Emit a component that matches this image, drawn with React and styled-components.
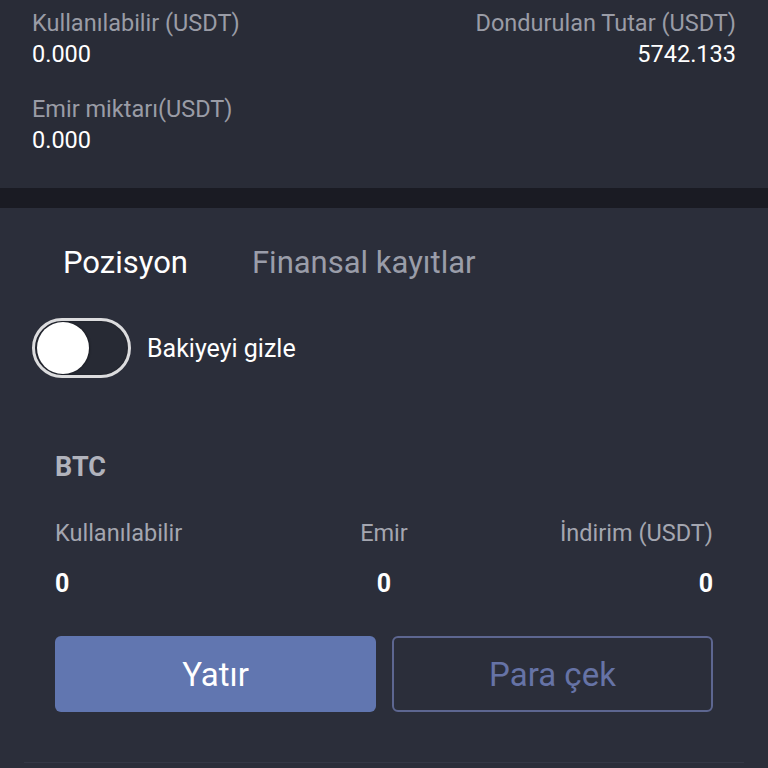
import React, { useState } from "react";
import styled, { createGlobalStyle } from "styled-components";

const GlobalStyle = createGlobalStyle`
  html, body {
    margin: 0;
    padding: 0;
    background: #2b2e3a;
  }
  body {
    font-family: Roboto, "Noto Sans", "Liberation Sans", sans-serif;
    -webkit-font-smoothing: antialiased;
  }
`;

const Page = styled.div`
  width: 768px;
  height: 768px;
  overflow: hidden;
  display: flex;
  flex-direction: column;
  background: #2b2e3a;
`;

const Summary = styled.section`
  background: #292c37;
  padding: 8px 32px 32px;
  display: flex;
  flex-direction: column;
  gap: 24px;
`;

const SummaryRow = styled.div`
  display: flex;
  justify-content: space-between;
`;

const Stat = styled.div`
  display: flex;
  flex-direction: column;
  align-items: ${(p) => (p.right ? "flex-end" : "flex-start")};
`;

const StatLabel = styled.span`
  font-size: 23.5px;
  line-height: 30px;
  color: #9a9ca6;
`;

const StatValue = styled.span`
  font-size: 23.5px;
  line-height: 32px;
  color: #ffffff;
`;

const Divider = styled.div`
  height: 20px;
  background: #1a1b23;
  flex-shrink: 0;
`;

const Wallet = styled.section`
  flex: 1;
  background: #2b2e3a;
  padding: 35px 24px 0;
  display: flex;
  flex-direction: column;
`;

const Tabs = styled.div`
  display: flex;
  gap: 64px;
  padding-left: 39px;
`;

const Tab = styled.button`
  background: none;
  border: none;
  padding: 0;
  font-family: inherit;
  font-size: 31px;
  line-height: 40px;
  color: ${(p) => (p.active ? "#ffffff" : "#9a9da9")};
  cursor: pointer;
`;

const ToggleRow = styled.label`
  display: flex;
  align-items: center;
  gap: 16px;
  margin: 35px 0 0 8px;
  cursor: pointer;
`;

const Switch = styled.span`
  width: 99px;
  height: 60px;
  box-sizing: border-box;
  border-radius: 30px;
  border: 3px solid #dcdcde;
  background: ${(p) => (p.on ? "#6176b0" : "#272a34")};
  display: flex;
  align-items: center;
  justify-content: ${(p) => (p.on ? "flex-end" : "flex-start")};
  padding: 0 2px;
  box-shadow: inset 0 0 2px rgba(0, 0, 0, 0.4);
`;

const Knob = styled.span`
  width: 52px;
  height: 52px;
  border-radius: 50%;
  background: #ffffff;
  box-shadow: 1px 0 2px rgba(0, 0, 0, 0.35);
`;

const ToggleText = styled.span`
  font-size: 25px;
  color: #ffffff;
`;

const Asset = styled.div`
  margin-top: 74px;
  padding: 0 31px 50px;
  border-bottom: 1px solid #353846;
  display: flex;
  flex-direction: column;
`;

const AssetName = styled.div`
  font-size: 27px;
  font-weight: 700;
  line-height: 30px;
  color: #b1b3bc;
`;

const Grid = styled.div`
  display: grid;
  grid-template-columns: 1fr 1fr 1fr;
  row-gap: 21px;
  margin-top: 36px;
`;

const Cell = styled.div`
  text-align: ${(p) => p.align};
  font-size: ${(p) => (p.value ? "25px" : "23.5px")};
  font-weight: ${(p) => (p.value ? 700 : 400)};
  line-height: 30px;
  color: ${(p) => (p.value ? "#ffffff" : "#a4a6b0")};
  white-space: nowrap;
`;

const Actions = styled.div`
  display: grid;
  grid-template-columns: 1fr 1fr;
  gap: 16px;
  margin-top: 37px;
`;

const ActionButton = styled.button`
  height: 76px;
  border-radius: 6px;
  font-family: inherit;
  font-size: 33px;
  cursor: pointer;
  box-sizing: border-box;
  background: ${(p) => (p.primary ? "#6176b0" : "transparent")};
  color: ${(p) => (p.primary ? "#ffffff" : "#6673a6")};
  border: ${(p) => (p.primary ? "none" : "2px solid #5d6690")};
`;

const columns = [
  { label: "Kullanılabilir", value: "0", align: "left" },
  { label: "Emir", value: "0", align: "center" },
  { label: "İndirim (USDT)", value: "0", align: "right" },
];

export default function App() {
  const [tab, setTab] = useState("pos");
  const [hidden, setHidden] = useState(false);

  return (
    <Page>
      <GlobalStyle />
      <Summary>
        <SummaryRow>
          <Stat>
            <StatLabel>Kullanılabilir (USDT)</StatLabel>
            <StatValue>0.000</StatValue>
          </Stat>
          <Stat right>
            <StatLabel>Dondurulan Tutar (USDT)</StatLabel>
            <StatValue>5742.133</StatValue>
          </Stat>
        </SummaryRow>
        <Stat>
          <StatLabel>Emir miktarı(USDT)</StatLabel>
          <StatValue>0.000</StatValue>
        </Stat>
      </Summary>
      <Divider />
      <Wallet>
        <Tabs>
          <Tab active={tab === "pos"} onClick={() => setTab("pos")}>
            Pozisyon
          </Tab>
          <Tab active={tab === "fin"} onClick={() => setTab("fin")}>
            Finansal kayıtlar
          </Tab>
        </Tabs>
        <ToggleRow onClick={() => setHidden(!hidden)}>
          <Switch on={hidden}>
            <Knob />
          </Switch>
          <ToggleText>Bakiyeyi gizle</ToggleText>
        </ToggleRow>
        <Asset>
          <AssetName>BTC</AssetName>
          <Grid>
            {columns.map((c) => (
              <Cell key={c.label} align={c.align}>
                {c.label}
              </Cell>
            ))}
            {columns.map((c) => (
              <Cell key={c.label + "-v"} align={c.align} value>
                {hidden ? "****" : c.value}
              </Cell>
            ))}
          </Grid>
          <Actions>
            <ActionButton primary>Yatır</ActionButton>
            <ActionButton>Para çek</ActionButton>
          </Actions>
        </Asset>
      </Wallet>
    </Page>
  );
}
